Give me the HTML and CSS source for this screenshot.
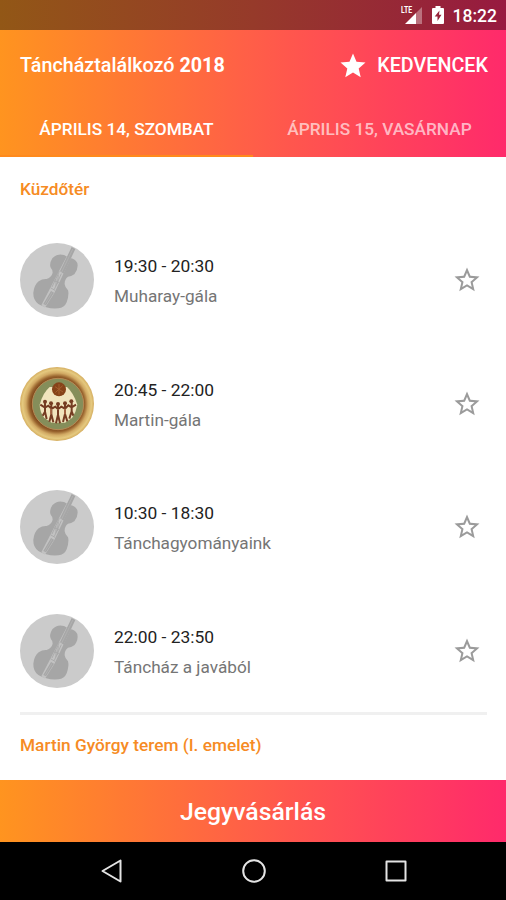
FILE: index.html
```html
<!DOCTYPE html>
<html lang="hu">
<head>
    <meta charset="UTF-8">
    <title>Táncháztalálkozó 2018</title>
    <link rel="stylesheet" href="styles.css">
</head>
<body>
    <svg class="symbols" aria-hidden="true">
        <symbol id="violin" viewBox="31 24 222 222">
            <circle cx="142" cy="135" r="111" fill="#cbcbcb"/>
            <path fill="#a6a6a6" d="M124 100 Q117 88 128 70 Q142 54 163 60 L180 69 Q196 71 203 84 Q207 102 194 118 Q184 125 175 125 Q164 133 165 148 Q166 158 175 166 Q179 179 171 202 Q164 219 146 220 Q113 223 86 207 Q70 195 71 173 Q74 149 87 139 Q98 131 111 132 Q126 126 129 113 Q129 104 124 100z"/>
            <path fill="#c2c2c2" d="M172 62 L184 68 L134 174 L106 218 L95 211 L119 164z"/>
            <path fill="#a6a6a6" d="M186 36 L197 42 L162 116 L151 109z M124 168 L133 173 L109 211 L101 207z"/>
            <path fill="none" stroke="#b6b6b6" stroke-width="2" d="M190 41 L156 111 M127 172 L105 209"/>
            <path fill="none" stroke="#a6a6a6" stroke-width="2.500" d="M149 109 L127 156 M155 116 L134 163 M132 137 L149 143 M139 133 L139 154 M146 119 L143 148 M122 158 L136 166"/>
        </symbol>
        <symbol id="star" viewBox="0 0 24 24">
            <path d="M12 17.27L18.18 21l-1.64-7.03L22 9.24l-7.19-.61L12 2 9.19 8.63 2 9.24l5.46 4.73L5.82 21z"/>
        </symbol>
        <symbol id="star-outline" viewBox="0 0 24 24">
            <path d="M22 9.24l-7.19-.62L12 2 9.19 8.63 2 9.24l5.46 4.73L5.82 21 12 17.27 18.18 21l-1.63-7.03L22 9.24zM12 15.4l-3.76 2.27 1-4.28-3.32-2.88 4.38-.38L12 6.1l1.71 4.04 4.38.38-3.32 2.88 1 4.28L12 15.4z"/>
        </symbol>
    </svg>

    <div class="status-bar">
        <svg class="signal" viewBox="0 0 22 20">
            <text x="0" y="8" textLength="11" lengthAdjust="spacingAndGlyphs">LTE</text>
            <path d="M4 19 L15 8 V19z" fill="#fff"/>
            <path d="M15 8 L21 2 V19 H15z" fill="#fff" opacity=".35"/>
        </svg>
        <svg class="battery" viewBox="0 0 12 18">
            <path fill="#fff" fill-rule="evenodd" d="M3.5 0h5v2H11q1 0 1 1v14q0 1-1 1H1q-1 0-1-1V3q0-1 1-1h2.500zM7.500 4.500L2.700 10.500H5.500V15L9.500 8.700H7z"/>
        </svg>
        <span class="clock">18:22</span>
    </div>

    <header>
        <div class="toolbar">
            <h1>Táncháztalálkozó <b>2018</b></h1>
            <a class="favorites"><svg><use href="#star"/></svg><span>KEDVENCEK</span></a>
        </div>
        <nav class="tabs">
            <a class="tab active"><span>ÁPRILIS 14, SZOMBAT</span></a>
            <a class="tab"><span>ÁPRILIS 15, VASÁRNAP</span></a>
        </nav>
    </header>

    <main>
        <h2>Küzdőtér</h2>
        <ul class="events">
            <li class="event">
                <svg class="avatar"><use href="#violin"/></svg>
                <div class="info">
                    <p class="time">19:30 - 20:30</p>
                    <p class="name">Muharay-gála</p>
                </div>
                <svg class="star"><use href="#star-outline"/></svg>
            </li>
            <li class="event">
                <svg class="avatar" viewBox="31 24 222 222">
                    <defs>
                        <radialGradient id="ring">
                            <stop offset=".66" stop-color="#763f16"/>
                            <stop offset=".75" stop-color="#99642e"/>
                            <stop offset=".84" stop-color="#d2aa64"/>
                            <stop offset=".93" stop-color="#e5c97f"/>
                            <stop offset="1" stop-color="#d5ae61"/>
                        </radialGradient>
                    </defs>
                    <circle cx="142" cy="135" r="111" fill="url(#ring)"/>
                    <circle cx="145" cy="135" r="77" fill="#858e5a" stroke="#b58a55" stroke-width="3"/>
                    <path fill="#f0e4bd" d="M120 84 L172 84 Q192 102 203 137 Q200 158 187 177 L166 191 L126 191 L104 177 Q90 158 90 137 Q99 102 120 84z"/>
                    <circle cx="148" cy="91" r="21" fill="#864319"/>
                    <path d="M136 83l24 16M137 101l22-21M148 75v32" stroke="#a4602f" stroke-width="3"/>
                    <g fill="#753c22">
                        <circle cx="106" cy="128" r="6"/><circle cx="124" cy="133" r="6"/><circle cx="145" cy="135" r="6"/><circle cx="166" cy="133" r="6"/><circle cx="185" cy="127" r="6"/>
                    </g>
                    <path fill="none" stroke="#753c22" stroke-width="6" d="M92 137 L106 146 L116 140 L126 149 L137 143 L145 150 L155 143 L166 149 L176 139 L186 145 L199 137 M106 132 V158 L99 170 M106 158 L111 180 M125 136 V166 L119 188 M125 166 L131 190 M145 138 V167 L139 193 M145 167 L151 193 M166 137 V165 L160 189 M166 165 L173 187 M186 132 V157 L179 179 M186 157 L191 170"/>
                    <path fill="none" stroke="#a86948" stroke-width="5" d="M124 149 V166 M166 149 V166"/>
                </svg>
                <div class="info">
                    <p class="time">20:45 - 22:00</p>
                    <p class="name">Martin-gála</p>
                </div>
                <svg class="star"><use href="#star-outline"/></svg>
            </li>
            <li class="event">
                <svg class="avatar"><use href="#violin"/></svg>
                <div class="info">
                    <p class="time">10:30 - 18:30</p>
                    <p class="name">Tánchagyományaink</p>
                </div>
                <svg class="star"><use href="#star-outline"/></svg>
            </li>
            <li class="event">
                <svg class="avatar"><use href="#violin"/></svg>
                <div class="info">
                    <p class="time">22:00 - 23:50</p>
                    <p class="name">Táncház a javából</p>
                </div>
                <svg class="star"><use href="#star-outline"/></svg>
            </li>
        </ul>
        <h2 class="next">Martin György terem (I. emelet)</h2>
    </main>

    <a class="tickets">Jegyvásárlás</a>

    <footer>
        <svg viewBox="0 0 24 24"><path d="M20.500 1.500V22.500L2.500 12z"/></svg>
        <svg viewBox="0 0 24 24"><circle cx="12" cy="12" r="10.800"/></svg>
        <svg viewBox="0 0 24 24"><rect x="2.500" y="2.500" width="19" height="19"/></svg>
    </footer>
</body>
</html>
```
FILE: styles.css
```css
* {
    box-sizing: border-box;
}
body {
    margin: 0;
    height: 900px;
    display: flex;
    flex-direction: column;
    overflow: hidden;
    background-color: #fff;
    font-family: Roboto, sans-serif;
}
h1, h2, p, ul {
    margin: 0;
    padding: 0;
}
.symbols {
    display: none;
}
.status-bar {
    height: 30px;
    flex: none;
    display: flex;
    align-items: center;
    justify-content: flex-end;
    padding-right: 9px;
    background: linear-gradient(to right, #925716, #963a2a 50%, #971a40);
    color: #fff;
}
.signal {
    width: 22px;
    height: 20px;
    margin-right: 9px;
}
.signal text {
    font-size: 9px;
    font-weight: bold;
    fill: #fff;
}
.battery {
    width: 12px;
    height: 18px;
    margin-right: 9px;
}
.clock {
    font-size: 17.5px;
    font-weight: 500;
    line-height: 30px;
    padding-top: 2px;
}
header {
    height: 127px;
    flex: none;
    background: linear-gradient(to right, #ff941f, #ff5e48 50%, #ff2a6b);
    color: #fff;
}
.toolbar {
    height: 71px;
    display: flex;
    align-items: center;
    justify-content: space-between;
    padding: 0 18px 0 20px;
}
h1 {
    font-size: 19.75px;
    font-weight: 500;
}
.favorites {
    display: flex;
    align-items: center;
    gap: 9px;
    font-size: 19.75px;
    font-weight: 500;
}
.favorites svg {
    width: 30px;
    height: 30px;
    fill: #fff;
}
.tabs {
    display: flex;
    height: 56px;
}
.tab {
    flex: 1;
    display: flex;
    align-items: center;
    justify-content: center;
    padding-top: 2px;
    font-size: 17.25px;
    font-weight: 500;
    color: rgba(255, 255, 255, 0.65);
    border-bottom: 2px solid transparent;
}
.tab.active {
    color: #fff;
    border-bottom-color: #ff8a1c;
}
main {
    flex: 1;
    padding: 0 19px 0 20px;
}
h2 {
    height: 61px;
    padding-top: 22px;
    font-size: 17.25px;
    line-height: 21px;
    font-weight: 500;
    color: #f68b24;
}
h2.next {
    height: auto;
    padding-top: 20px;
}
.events {
    height: 497px;
    list-style: none;
    border-bottom: 3px solid #f0f0f0;
}
.event {
    height: 123.8px;
    display: flex;
    align-items: center;
}
.avatar {
    width: 74px;
    height: 74px;
    margin-right: 20px;
}
.info {
    flex: 1;
    padding-top: 2px;
}
.time, .name {
    font-size: 17.4px;
    line-height: 30px;
}
.time {
    color: #222;
}
.name {
    font-size: 17.2px;
    color: #757575;
}
.star {
    width: 30px;
    height: 30px;
    margin-right: 5px;
    fill: #9b9b9b;
}
.tickets {
    height: 62px;
    flex: none;
    background: linear-gradient(to right, #ff941f, #ff5e48 50%, #ff2a6b);
    color: #fff;
    font-size: 24.8px;
    font-weight: 500;
    line-height: 63px;
    text-align: center;
}
footer {
    height: 58px;
    flex: none;
    display: flex;
    align-items: center;
    justify-content: center;
    gap: 118px;
    padding-left: 2px;
    background-color: #000;
}
footer svg {
    width: 24px;
    height: 24px;
    fill: none;
    stroke: #e4e4e4;
    stroke-width: 2;
    stroke-linejoin: round;
}
```
